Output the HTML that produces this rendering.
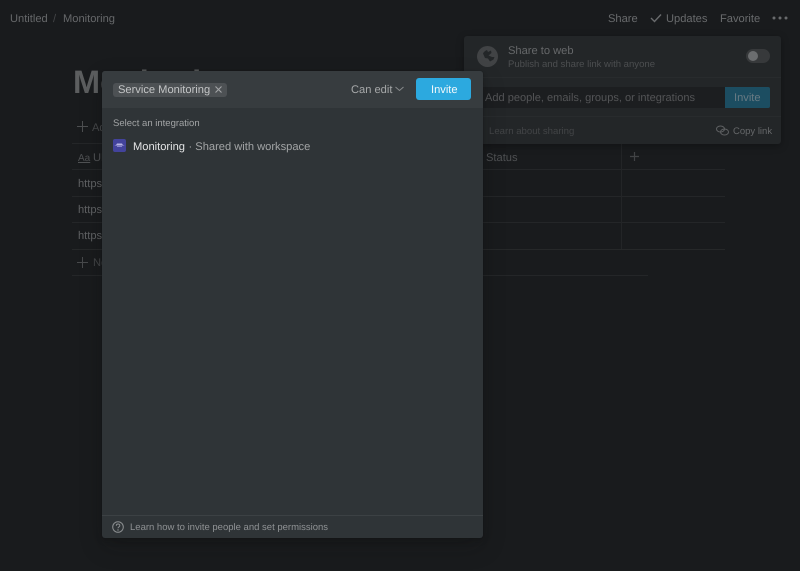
<!DOCTYPE html>
<html lang="en">
<head>
<meta charset="utf-8">
<title>Monitoring</title>
<style>
html,body{margin:0;padding:0;width:800px;height:571px;overflow:hidden;background:#191b1d;font-family:"Liberation Sans",sans-serif;text-rendering:geometricPrecision;}
.a{position:absolute;white-space:nowrap;line-height:1;}
.l{position:absolute;}
svg{position:absolute;display:block;}
</style>
</head>
<body>
<div class="a" style="left:10px;top:14px;font-size:11.14px;color:#66686a;">Untitled</div>
<div class="a" style="left:53px;top:14px;font-size:11.14px;color:#444648;">/</div>
<div class="a" style="left:63px;top:14px;font-size:11.14px;color:#66686a;">Monitoring</div>
<div class="a" style="left:608px;top:14px;font-size:11.14px;color:#696b6d;">Share</div>
<svg style="left:650px;top:13px" width="12" height="10" viewBox="0 0 12 10"><path d="M1 5l3.500 3.500L11 1.500" fill="none" stroke="#696b6d" stroke-width="1.400"/></svg>
<div class="a" style="left:666px;top:14px;font-size:11.14px;color:#696b6d;">Updates</div>
<div class="a" style="left:720px;top:14px;font-size:11.14px;color:#696b6d;">Favorite</div>
<svg style="left:772px;top:15px" width="16" height="6" viewBox="0 0 16 6"><circle cx="2" cy="3" r="1.500" fill="#696b6d"/><circle cx="8" cy="3" r="1.500" fill="#696b6d"/><circle cx="14" cy="3" r="1.500" fill="#696b6d"/></svg>

<!-- page behind -->
<div class="a" style="left:73px;top:66px;font-size:32.5px;font-weight:700;color:#5c5e5f;">Monitoring</div>
<svg style="left:77px;top:121px" width="11" height="11" viewBox="0 0 11 11"><path d="M5.500 0v11M0 5.500h11" stroke="#4d4f51" stroke-width="1"/></svg>
<div class="a" style="left:92px;top:123px;font-size:11.14px;color:#47494b;">Add</div>
<div class="l" style="left:72px;top:143px;width:653px;height:1px;background:#242628;"></div>
<div class="a" style="left:78px;top:154px;font-size:10px;color:#505254;text-decoration:underline;">Aa</div>
<div class="a" style="left:93px;top:153px;font-size:11.14px;color:#505254;">URL</div>
<div class="a" style="left:486px;top:153px;font-size:11.14px;color:#4f5153;">Status</div>
<svg style="left:630px;top:152px" width="9" height="9" viewBox="0 0 9 9"><path d="M4.500 0v9M0 4.500h9" stroke="#414345" stroke-width="1.200"/></svg>
<div class="l" style="left:72px;top:169px;width:653px;height:1px;background:#242628;"></div>
<div class="l" style="left:72px;top:196px;width:653px;height:1px;background:#242628;"></div>
<div class="l" style="left:72px;top:222px;width:653px;height:1px;background:#242628;"></div>
<div class="l" style="left:72px;top:249px;width:653px;height:1px;background:#262829;"></div>
<div class="l" style="left:72px;top:275px;width:576px;height:1px;background:#242628;"></div>
<div class="l" style="left:621px;top:144px;width:1px;height:105px;background:#232527;"></div>
<div class="a" style="left:78px;top:179px;font-size:11.14px;color:#606264;">https</div>
<div class="a" style="left:78px;top:205px;font-size:11.14px;color:#606264;">https</div>
<div class="a" style="left:78px;top:231px;font-size:11.14px;color:#606264;">https</div>
<svg style="left:77px;top:257px" width="11" height="11" viewBox="0 0 11 11"><path d="M5.500 0v11M0 5.500h11" stroke="#47494b" stroke-width="1"/></svg>
<div class="a" style="left:93px;top:258px;font-size:11.14px;color:#424446;">New</div>

<!-- share panel -->
<div class="l" style="left:464px;top:36px;width:317px;height:108px;background:#232628;border-radius:3px;box-shadow:0 2px 8px rgba(0,0,0,.3);"></div>
<svg style="left:477px;top:46px" width="21" height="21" viewBox="0 0 21 21"><circle cx="10.500" cy="10.500" r="10.500" fill="#414345"/><path d="M6 7.500c1-2 2.500-3 4-3.500l1 2 3-1.500.5 2.500-3 2.500 3.500 1.500 2.500 0-1 2.500-3.500 2-2-3-3-.5z" fill="#232628"/></svg>
<div class="a" style="left:508px;top:46px;font-size:11.14px;color:#66686a;">Share to web</div>
<div class="a" style="left:508px;top:60px;font-size:9.55px;color:#4c4e50;">Publish and share link with anyone</div>
<div class="l" style="left:746px;top:49px;width:24px;height:14px;border-radius:7px;background:#37393b;"></div>
<div class="l" style="left:748px;top:51px;width:10px;height:10px;border-radius:50%;background:#6b6d6f;"></div>
<div class="l" style="left:464px;top:77px;width:317px;height:1px;background:#282b2d;"></div>
<div class="l" style="left:470px;top:87px;width:255px;height:21px;background:#1c1e20;"></div>
<div class="a" style="left:485px;top:93px;font-size:11.05px;color:#535456;">Add people, emails, groups, or integrations</div>
<div class="l" style="left:725px;top:87px;width:45px;height:21px;background:#1c4d61;border-radius:0 2px 2px 0;"></div>
<div class="a" style="left:734px;top:93px;font-size:11.14px;color:#687a83;">Invite</div>
<div class="l" style="left:464px;top:116px;width:317px;height:1px;background:#282b2d;"></div>
<div class="a" style="left:489px;top:127px;font-size:9.6px;color:#424446;">Learn about sharing</div>
<svg style="left:716px;top:125px" width="13" height="11" viewBox="0 0 13 11"><ellipse cx="4.500" cy="4" rx="4" ry="3" fill="none" stroke="#5f6163" stroke-width="1"/><ellipse cx="8.500" cy="7" rx="4" ry="3" fill="none" stroke="#5f6163" stroke-width="1"/></svg>
<div class="a" style="left:733px;top:127px;font-size:9.5px;color:#656769;">Copy link</div>

<!-- modal -->
<div class="l" style="left:102px;top:71px;width:380.5px;height:467px;background:#2f3437;border-radius:3px;box-shadow:0 0 0 1px rgba(15,15,15,.1),0 3px 6px rgba(15,15,15,.2),0 9px 24px rgba(15,15,15,.2);"></div>
<div class="l" style="left:102px;top:71px;width:380.5px;height:37px;background:#373c3f;border-radius:3px 3px 0 0;"></div>
<div class="l" style="left:113px;top:83px;width:114px;height:14px;background:#4d5154;border-radius:3px;"></div>
<div class="a" style="left:118px;top:85px;font-size:11.14px;color:#c3c5c6;">Service Monitoring</div>
<svg style="left:215px;top:86px" width="7" height="7" viewBox="0 0 7 7"><path d="M.5.500l6 6M6.500.500l-6 6" stroke="#a3a5a7" stroke-width="1.100"/></svg>
<div class="a" style="left:351px;top:85px;font-size:11.14px;color:#a6a8a9;">Can edit</div>
<svg style="left:395px;top:86px" width="9" height="6" viewBox="0 0 9 6"><path d="M.5 1l4 3.500L8.500 1" fill="none" stroke="#888b8d" stroke-width="1"/></svg>
<div class="l" style="left:416px;top:78px;width:55px;height:22px;background:#2ca9df;border-radius:3px;"></div>
<div class="a" style="left:431px;top:85px;font-size:11.14px;color:#f2f8fb;">Invite</div>
<div class="a" style="left:113px;top:119px;font-size:9.5px;color:#a3a5a6;">Select an integration</div>
<div class="l" style="left:113px;top:139px;width:13px;height:13px;background:#43439c;border-radius:2px;"></div>
<svg style="left:113px;top:139px" width="13" height="13" viewBox="0 0 13 13"><path d="M1 6.500c2-.300 2.500-.800 3-2h5c.500 1.200 1 1.700 3 2z" fill="#b9b6e6"/><path d="M4 7.500h5" stroke="#8786cc" stroke-width="1"/></svg>
<div class="a" style="left:133px;top:142px;font-size:11.14px;color:#e3e4e5;">Monitoring</div>
<div class="a" style="left:188.5px;top:142px;font-size:11.14px;color:#a3a5a6;">· Shared with workspace</div>
<div class="l" style="left:102px;top:515px;width:380.5px;height:1px;background:#3c4144;"></div>
<svg style="left:112px;top:521px" width="12" height="12" viewBox="0 0 12 12"><circle cx="6" cy="6" r="5.300" fill="none" stroke="#8c8f91" stroke-width="1"/><path d="M4.300 4.700c0-2.200 3.500-2.200 3.500-.1 0 1.300-1.800 1.300-1.800 2.700" fill="none" stroke="#8c8f91" stroke-width="1"/><circle cx="6" cy="9" r=".7" fill="#8c8f91"/></svg>
<div class="a" style="left:130px;top:523px;font-size:9.5px;color:#8f9294;">Learn how to invite people and set permissions</div>
</body>
</html>
